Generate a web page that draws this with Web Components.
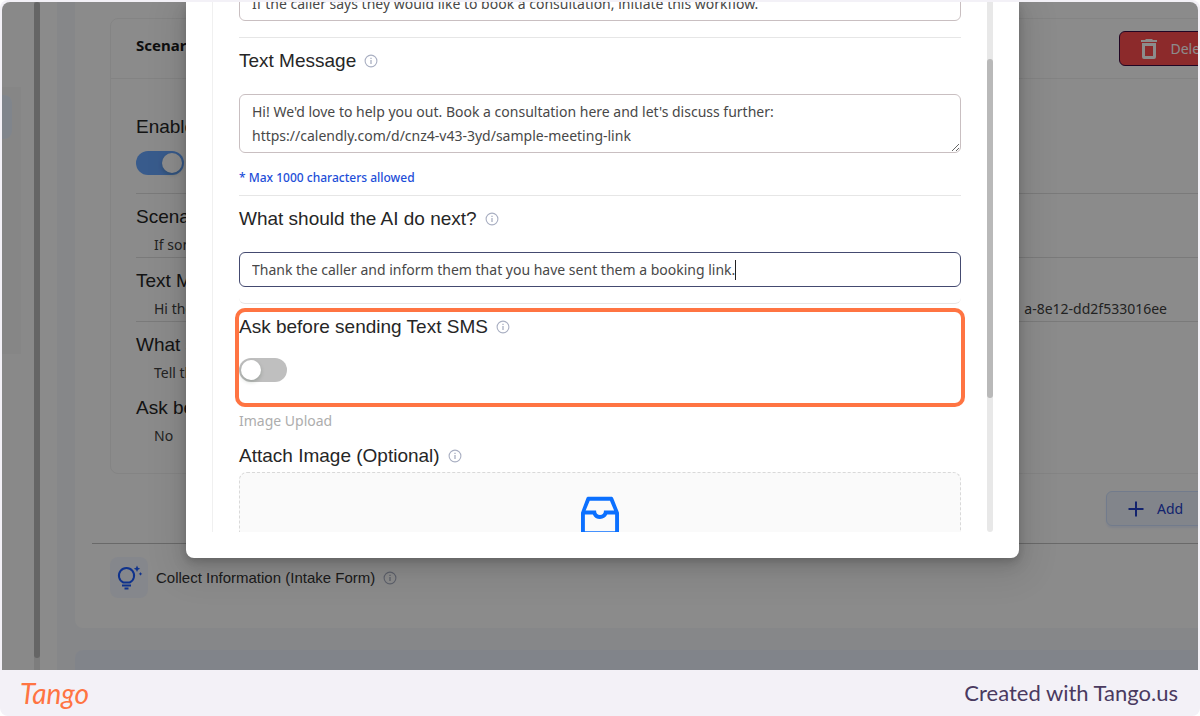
<!DOCTYPE html>
<html lang="en">
<head>
<meta charset="utf-8">
<title>Scenario settings</title>
<style>
  body {
    margin: 0;
    background: #fff;
    font-family: "Noto Sans", sans-serif;
    font-size: 14px;
    line-height: 20px;
    color: #404040;
    --heading-font: "Liberation Sans", Arial, sans-serif;
  }
</style>
</head>
<body>
<tango-frame>
  <app-backdrop></app-backdrop>
  <scenario-modal></scenario-modal>
</tango-frame>

<script>
(function() {
  function attach(el, html) {
    let root = el.attachShadow({mode: 'open'});
    root.innerHTML = html;
    return root;
  }

  // Small (i) hint next to the headings
  class InfoIcon extends HTMLElement {
    constructor() {
      super();
      attach(this, `
<style>
  :host { display: inline-flex; flex: none; color: #a9afc2; }
  svg { display: block; width: 14px; height: 14px; }
</style>
<svg viewBox="0 0 14 14" fill="none" stroke="currentColor" aria-hidden="true">
  <circle cx="7" cy="7" r="5.9" stroke-width="1.1"/>
  <path d="M7 6.1v4M7 3.8v1.3" stroke-width="1.3"/>
</svg>
`);
    }
  }
  customElements.define('info-icon', InfoIcon);

  class FieldHeading extends HTMLElement {
    constructor() {
      super();
      attach(this, `
<style>
  :host { display: block; }
  h3 {
    display: flex;
    align-items: center;
    gap: 8px;
    margin: 0;
    font: 400 19px/28px var(--heading-font);
    color: #262626;
    white-space: nowrap;
  }
  info-icon { display: none; }
  :host([info]) info-icon { display: inline-flex; }
</style>
<h3><slot></slot><info-icon></info-icon></h3>
`);
    }
  }
  customElements.define('field-heading', FieldHeading);

  class ToggleSwitch extends HTMLElement {
    constructor() {
      super();
      let root = attach(this, `
<style>
  :host { display: block; height: 24px; }
  input {
    appearance: none;
    display: flex;
    align-items: center;
    box-sizing: border-box;
    width: 48px;
    height: 24px;
    margin: 0;
    padding: 0 2px;
    border-radius: 12px;
    background: #bfbfbf;
  }
  input::before {
    content: "";
    width: 20px;
    height: 20px;
    border-radius: 50%;
    background: #fff;
    box-shadow: 0 2px 4px rgba(0,35,11,0.2);
  }
  input:checked { background: #67a6ff; justify-content: flex-end; }
</style>
<input type="checkbox" role="switch">
`);
      let input = root.querySelector('input');
      input.checked = this.hasAttribute('checked');
      input.setAttribute('aria-label', this.getAttribute('label') || '');
    }
  }
  customElements.define('toggle-switch', ToggleSwitch);

  class ActionButton extends HTMLElement {
    constructor() {
      super();
      attach(this, `
<style>
  :host { display: block; }
  button {
    display: flex;
    align-items: center;
    gap: 9px;
    box-sizing: border-box;
    min-width: 148px;
    height: 35px;
    padding: 0 17px;
    border: 1px solid #cfe1ff;
    border-radius: 6px;
    background: #edf3fd;
    box-shadow: 0 2px 2px rgba(5,80,255,0.08);
    font: inherit;
    color: #2440c8;
    white-space: nowrap;
  }
  :host([danger]) button {
    min-width: 110px;
    border-color: #3c0a40;
    background: #ff4d4f;
    box-shadow: none;
    color: #fff;
  }
</style>
<button type="button"><slot name="icon"></slot><slot></slot></button>
`);
    }
  }
  customElements.define('action-button', ActionButton);

  // One read-only line of the scenario card
  class SummaryRow extends HTMLElement {
    constructor() {
      super();
      attach(this, `
<style>
  :host { display: block; padding: 9px 0 2px; border-bottom: 1px solid #dedede; }
  :host([plain]) { border-bottom: none; }
  .value {
    display: flex;
    justify-content: space-between;
    height: 20px;
    margin-top: 4px;
    padding: 0 86px 0 18px;
    white-space: nowrap;
  }
</style>
<field-heading><slot name="title"></slot></field-heading>
<div class="value"><slot></slot></div>
`);
    }
  }
  customElements.define('summary-row', SummaryRow);

  class AppBackdrop extends HTMLElement {
    constructor() {
      super();
      attach(this, `
<style>
  :host { display: flex; height: 100%; margin-right: -90px; background: #fdfdfd; }
  .nav { flex: none; width: 32px; padding-top: 85px; box-sizing: border-box; background: #fafafa; }
  .group { width: 19px; height: 267px; padding-top: 8px; box-sizing: border-box; background: #f5f5f5; }
  .item { width: 10px; height: 44px; border-radius: 0 8px 8px 0; background: #eaf3ff; }
  .bar { flex: none; width: 6px; margin-right: 17px; background: #e4e4e4; }
  .bar div { height: 656px; border-radius: 3px; background: #b8b8b8; }
  .work { flex: 1; min-width: 0; padding-left: 18px; background: #f4f6fa; }
  .panel {
    padding: 16px 34px 30px 17px;
    border-radius: 0 0 8px 8px;
    background: #fdfdfd;
  }
  .card { margin-left: 18px; border: 1px solid #f0f0f0; border-radius: 8px; }
  .card header {
    display: flex;
    align-items: center;
    justify-content: space-between;
    height: 59px;
    padding: 0 22px 0 25px;
    border-bottom: 1px solid #eee;
  }
  h2 { margin: 0 0 8px; font-size: 15px; line-height: 20px; color: #1a1a1a; }
  .body { padding: 25px 0 25px 25px; }
  .enable { padding: 9px 0 18px; border-bottom: 1px solid #dedede; }
  toggle-switch { margin-top: 10px; }
  .add { display: flex; justify-content: flex-end; margin: 17px 0; }
  .intake {
    display: flex;
    align-items: center;
    gap: 8px;
    padding: 13px 0 0 18px;
    border-top: 1px solid #bfbfbf;
    font: 400 15px/20px var(--heading-font);
    color: #333;
  }
  .tile {
    display: flex;
    align-items: center;
    justify-content: center;
    width: 38px;
    height: 41px;
    border-radius: 8px;
    background: #f3f6ff;
  }
  .next { height: 80px; margin-top: 22px; border-radius: 8px; background: #ecf1fb; }
  svg { display: block; flex: none; }
</style>
<nav class="nav"><div class="group"><div class="item"></div></div></nav>
<div class="bar"><div></div></div>
<main class="work">
  <section class="panel">
    <article class="card">
      <header>
        <h2>Scenario</h2>
        <action-button danger>
          <svg slot="icon" width="24" height="24" viewBox="0 0 24 24" fill="currentColor">
            <path fill-rule="evenodd" d="M4 3h4l1-1h6l1 1h4v2H4zM5 6h14v14a2 2 0 0 1-2 2H7a2 2 0 0 1-2-2zM8 9v10h8V9z"/>
          </svg>
          Delete
        </action-button>
      </header>
      <div class="body">
        <div class="enable">
          <field-heading>Enable</field-heading>
          <toggle-switch checked label="Enable"></toggle-switch>
        </div>
        <summary-row><span slot="title">Scenario</span><span>If someone</span></summary-row>
        <summary-row><span slot="title">Text Message</span><span>Hi there</span><span>a-8e12-dd2f533016ee</span></summary-row>
        <summary-row plain><span slot="title">What should</span><span>Tell the</span></summary-row>
        <summary-row plain><span slot="title">Ask before</span><span>No</span></summary-row>
      </div>
    </article>
    <div class="add">
      <action-button>
        <svg slot="icon" width="24" height="24" viewBox="0 0 24 24" fill="none" stroke="currentColor" stroke-width="2">
          <path d="M12 4.5v15M4.5 12h15"/>
        </svg>
        Add
      </action-button>
    </div>
    <div class="intake">
      <span class="tile">
        <svg width="28" height="28" viewBox="0 0 28 28" fill="none" stroke="#1c5cff" stroke-width="2">
          <path d="M8.3 18.5A7.6 7.6 0 1 1 14.7 18.500z" stroke-linejoin="round"/>
          <path d="M7 21.500h9M9.500 24.500h4"/>
          <path fill="#1c5cff" stroke="none" d="M22 1.500l1 2.200 2.200 1-2.200 1-1 2.200-1-2.200-2.200-1 2.200-1zM25.500 8l.6 1.300 1.300.6-1.300.6-.6 1.300-.6-1.300-1.300-.6 1.300-.6z"/>
        </svg>
      </span>
      <span>Collect Information (Intake Form)</span>
      <info-icon></info-icon>
    </div>
  </section>
  <section class="next"></section>
</main>
`);
    }
  }
  customElements.define('app-backdrop', AppBackdrop);

  // Bordered text control: rows="2" gives a resizable box, caret shows the cursor
  class TextField extends HTMLElement {
    constructor() {
      super();
      let rows = Number(this.getAttribute('rows') || 1);
      let root = attach(this, `
<style>
  :host { display: block; }
  .box {
    display: flex;
    align-items: center;
    box-sizing: border-box;
    height: 35px;
    border: 1px solid #c9bfc1;
    border-radius: 6px;
    background: #fff;
    overflow: hidden;
  }
  .box.area { height: 59px; }
  :host([caret]) .box { border-color: #444a70; }
  input, textarea {
    box-sizing: border-box;
    width: 100%;
    height: 100%;
    margin: 0;
    padding: 0 12px;
    border: none;
    outline: none;
    background: none;
    font: inherit;
    color: #484848;
  }
  textarea { padding: 5px 12px; line-height: 24px; resize: vertical; overflow: hidden; }
  :host([caret]) input { width: auto; padding-right: 0; field-sizing: content; }
  .caret { display: none; width: 1px; height: 20px; background: #222; }
  :host([caret]) .caret { display: block; }
</style>
<div class="box ${rows > 1 ? 'area' : ''}">
  ${rows > 1 ? '<textarea></textarea>' : '<input type="text">'}
  <span class="caret"></span>
</div>
`);
      let control = root.querySelector('input, textarea');
      control.value = this.getAttribute('value');
      control.setAttribute('aria-label', this.getAttribute('label'));
    }
  }
  customElements.define('text-field', TextField);

  class ScenarioModal extends HTMLElement {
    constructor() {
      super();
      attach(this, `
<style>
  :host {
    position: absolute;
    inset: 0;
    display: flex;
    justify-content: center;
    padding: 0 0 112px 5px;
    background: rgba(0,0,0,0.45);
  }
  .dialog {
    display: flex;
    box-sizing: border-box;
    width: 833px;
    max-width: 100%;
    padding: 0 26px 26px;
    border-radius: 0 0 8px 8px;
    background: #fff;
    box-shadow: 0 6px 16px rgba(0,0,0,0.12), 0 3px 6px rgba(0,0,0,0.12), 0 9px 32px 12px rgba(0,0,0,0.08);
  }
  .view { flex: 1; min-width: 0; padding: 0 26px; border-left: 1px solid #f0f0f0; overflow: hidden; }
  form { margin-top: -16px; }
  .group { padding: 9px 0 16px; border-bottom: 1px solid #e6e6e6; }
  .group:first-child { padding-top: 0; }
  .group.message { padding-bottom: 7px; }
  .group.next { border-radius: 0 0 6px 6px; }
  .group text-field { margin-top: 19px; }
  .group:first-child text-field { margin-top: 0; }
  .limit { margin: 15px 0 0; font-size: 12px; font-weight: 500; color: #1d4ed8; }
  .ask { position: relative; padding-bottom: 21px; }
  .ask toggle-switch { margin-top: 17px; }
  .ask::after {
    content: "";
    position: absolute;
    inset: 4px -4px -4px;
    border: 4px solid #ff7442;
    border-radius: 10px;
  }
  .upload-label { margin: 7px 0 11px; color: #adadad; }
  .drop {
    display: flex;
    justify-content: center;
    height: 160px;
    margin-top: 2px;
    padding-top: 17px;
    border: 1px dashed #d9d9d9;
    border-radius: 8px;
    background: #fafafa;
  }
  .track { display: flow-root; flex: none; width: 6px; border-radius: 0 0 3px 3px; background: #e8e8e8; }
  .thumb { height: 64%; margin-top: 57px; border-radius: 3px; background: #b9b9b9; }
</style>
<div class="dialog" role="dialog" aria-label="Scenario">
  <div class="view">
    <form>
      <div class="group">
        <text-field label="Scenario" value="If the caller says they would like to book a consultation, initiate this workflow."></text-field>
      </div>
      <div class="group message">
        <field-heading info>Text Message</field-heading>
        <text-field rows="2" label="Text Message" value="Hi! We'd love to help you out. Book a consultation here and let's discuss further:&#10;https://calendly.com/d/cnz4-v43-3yd/sample-meeting-link"></text-field>
        <p class="limit">* Max 1000 characters allowed</p>
      </div>
      <div class="group next">
        <field-heading info>What should the AI do next?</field-heading>
        <text-field caret label="What should the AI do next?" value="Thank the caller and inform them that you have sent them a booking link."></text-field>
      </div>
      <div class="group ask">
        <field-heading info>Ask before sending Text SMS</field-heading>
        <toggle-switch label="Ask before sending Text SMS"></toggle-switch>
      </div>
      <p class="upload-label">Image Upload</p>
      <field-heading info>Attach Image (Optional)</field-heading>
      <div class="drop">
        <svg width="52" height="52" viewBox="0 0 1024 1024" fill="#0b70ff" aria-hidden="true">
          <path d="M885.200 446.300l-.2-.8-112.200-285.100c-5-16.100-19.900-27.200-36.800-27.200H281.200c-17 0-32.100 11.300-36.900 27.600L139.400 443l-.3.7-.2.8c-1.300 4.900-1.700 9.900-1 14.800-.1 1.600-.2 3.200-.2 4.800V830a60.900 60.900 0 0 0 60.800 60.800h627.200c33.500 0 60.800-27.300 60.900-60.800V464.100c0-1.300 0-2.600-.1-3.700.4-4.900 0-9.600-1.300-14.100zm-295.800-43l-.3 15.700c-.8 44.900-31.800 75.100-77.100 75.100-22.100 0-41.100-7.100-54.800-20.600S436 441.200 435.600 419l-.3-15.700H229.500L309 210h399.200l81.700 193.300H589.400zm-375 76.800h157.300c24.300 57.100 76 90.800 140.400 90.800 33.700 0 65-9.400 90.300-27.200 22.200-15.600 39.500-37.400 50.700-63.600h156.500V814H214.400V480.100z"/>
        </svg>
      </div>
    </form>
  </div>
  <div class="track"><div class="thumb"></div></div>
</div>
`);
    }
  }
  customElements.define('scenario-modal', ScenarioModal);

  class TangoFrame extends HTMLElement {
    constructor() {
      super();
      attach(this, `
<style>
  :host {
    display: flex;
    flex-direction: column;
    box-sizing: border-box;
    height: 100vh;
    padding: 2px 2px 0;
    border-radius: 8px;
    background: #f3f1f7;
    overflow: hidden;
  }
  .screen {
    position: relative;
    flex: 1;
    min-height: 0;
    border-radius: 8px 8px 0 0;
    overflow: hidden;
  }
  footer {
    display: flex;
    flex: none;
    align-items: center;
    justify-content: space-between;
    height: 46px;
    padding: 0 20px 0 18px;
    font: 400 22px/28px Lato, sans-serif;
    color: #4a3a60;
  }
  .logo {
    font-style: italic;
    font-size: 28px;
    color: #ff7442;
  }
</style>
<div class="screen"><slot></slot></div>
<footer>
  <span class="logo">Tango</span>
  <span>Created with Tango.us</span>
</footer>
`);
    }
  }
  customElements.define('tango-frame', TangoFrame);
})();
</script>
</body>
</html>
